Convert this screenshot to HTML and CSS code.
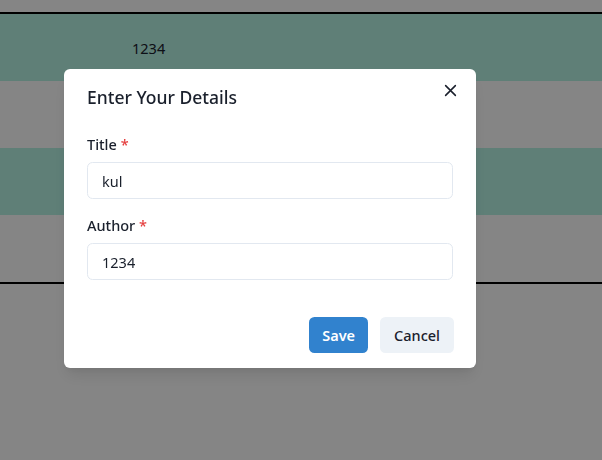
FILE: index.html
```html
<!DOCTYPE html>
<html lang="en">
  <head>
    <meta charset="UTF-8" />
    <meta name="viewport" content="width=device-width, initial-scale=1.0" />
    <title>Books</title>
    <link rel="stylesheet" href="styles.css">
  </head>
  <body>
    <table id="book-table">
      <tbody>
        <tr class="striped">
          <td class="col-title"></td>
          <td>1234</td>
        </tr>
        <tr>
          <td class="col-title"></td>
          <td></td>
        </tr>
        <tr class="striped">
          <td class="col-title"></td>
          <td></td>
        </tr>
        <tr>
          <td class="col-title"></td>
          <td></td>
        </tr>
      </tbody>
    </table>

    <div class="overlay">
      <div class="modal" role="dialog">
        <header class="modal-header">Enter Your Details</header>
        <button class="close-btn" title="Close">
          <svg viewBox="0 0 24 24" width="13" height="13">
            <path d="M3 3 L21 21 M21 3 L3 21" stroke="currentColor" stroke-width="2.8" stroke-linecap="round" />
          </svg>
        </button>

        <div class="modal-body">
          <div class="field">
            <label for="title-input">Title <span class="required">*</span></label>
            <input id="title-input" type="text" value="kul" />
          </div>
          <div class="field">
            <label for="author-input">Author <span class="required">*</span></label>
            <input id="author-input" type="text" value="1234" />
          </div>
        </div>

        <footer class="modal-footer">
          <button class="btn btn-save">Save</button>
          <button class="btn btn-cancel">Cancel</button>
        </footer>
      </div>
    </div>
  </body>
</html>
```

FILE: styles.css
```css
* {
  margin: 0;
  padding: 0;
  box-sizing: border-box;
}

body {
  background-color: #ffffff;
  font-family: "Noto Sans", "Open Sans", sans-serif;
  color: #1a202c;
  padding-top: 12px;
}

#book-table {
  width: 100%;
  border-collapse: separate;
  border-spacing: 0;
  border-top: 2px solid #000000;
  border-bottom: 2px solid #000000;
  font-size: 14.5px;
}

#book-table td {
  height: 67px;
  vertical-align: middle;
}

#book-table .col-title {
  width: 132px;
}

#book-table .striped {
  background-color: #b6f4e5;
}

/* dimmed backdrop behind the dialog */
.overlay {
  position: fixed;
  inset: 0;
  background-color: rgba(0, 0, 0, 0.48);
  padding: 69px 0 0 64px;
}

.modal {
  position: relative;
  width: 412px;
  background-color: #ffffff;
  border-radius: 6px;
  box-shadow: 0 10px 15px -3px rgba(0, 0, 0, 0.1), 0 4px 6px -2px rgba(0, 0, 0, 0.05);
}

.modal-header {
  padding: 15px 23px;
  font-size: 17.5px;
  line-height: 27px;
  font-weight: 500;
}

.close-btn {
  position: absolute;
  top: 7px;
  right: 11px;
  width: 29px;
  height: 29px;
  border: none;
  border-radius: 5px;
  background: transparent;
  color: #1a202c;
  display: flex;
  align-items: center;
  justify-content: center;
}

.modal-body {
  padding: 7px 23px 22px;
}

.field + .field {
  margin-top: 15px;
}

.field label {
  display: block;
  height: 22px;
  font-size: 14.5px;
  line-height: 22px;
  font-weight: 500;
  margin-bottom: 7px;
}

.required {
  color: #e53e3e;
}

.field input {
  display: block;
  width: 100%;
  height: 37px;
  padding: 0 14px;
  border: 1px solid #e2e8f0;
  border-radius: 5.5px;
  font-family: inherit;
  font-size: 14.5px;
  color: #1a202c;
  outline: none;
}

.modal-footer {
  display: flex;
  justify-content: flex-end;
  gap: 12px;
  padding: 15px 22px 15px 23px;
}

.btn {
  height: 36px;
  padding: 0 13px;
  border: none;
  border-radius: 5.5px;
  font-family: inherit;
  font-size: 14.5px;
  font-weight: 600;
}

.btn-save {
  background-color: #3182ce;
  color: #ffffff;
}

.btn-cancel {
  padding: 0 14px;
  background-color: #edf2f7;
  color: #1a202c;
  font-weight: 500;
}
```
